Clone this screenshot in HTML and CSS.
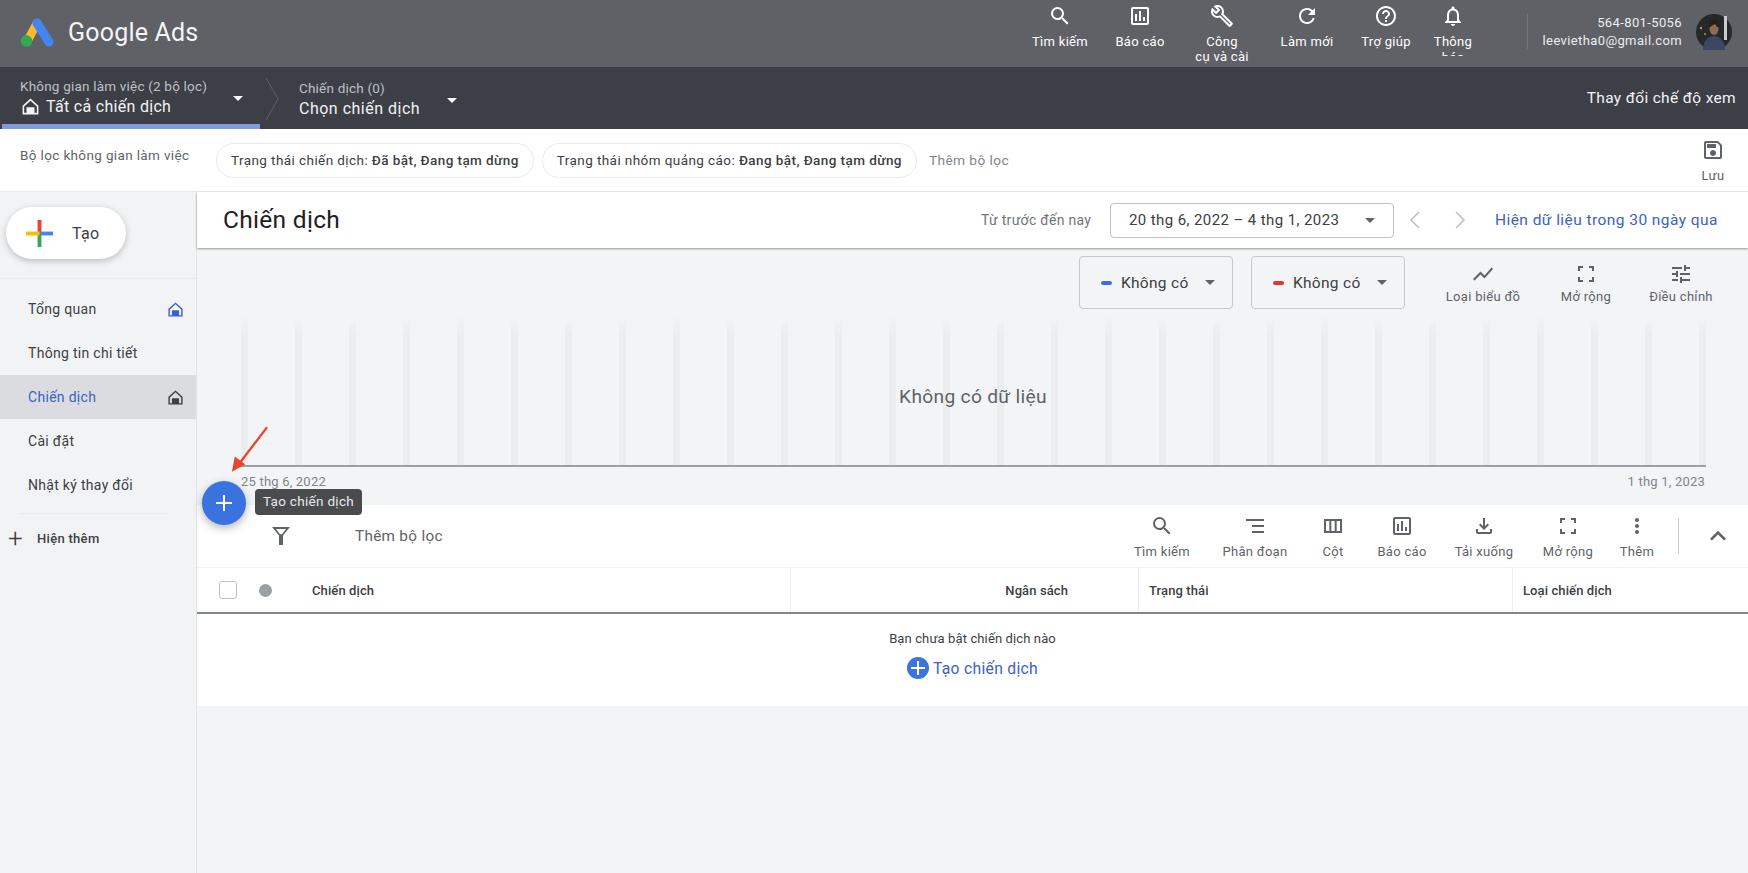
FILE: index.html
```html
<!DOCTYPE html>
<html lang="vi">
<head>
    <meta charset="UTF-8">
    <title>Chiến dịch - Google Ads</title>
    <link rel="stylesheet" href="styles.css">
</head>
<body>
    <svg class="defs" width="0" height="0">
        <symbol id="i-search" viewBox="0 0 24 24"><path d="M15.5 14h-.79l-.28-.27A6.471 6.471 0 0 0 16 9.5 6.5 6.5 0 1 0 9.5 16c1.61 0 3.09-.59 4.23-1.57l.27.28v.79l5 4.99L20.49 19l-4.99-5zm-6 0C7.01 14 5 11.99 5 9.5S7.01 5 9.5 5 14 7.01 14 9.5 11.99 14 9.5 14z"/></symbol>
        <symbol id="i-report" viewBox="0 0 24 24"><path d="M19 3H5c-1.1 0-2 .9-2 2v14c0 1.1.9 2 2 2h14c1.1 0 2-.9 2-2V5c0-1.1-.9-2-2-2zm0 16H5V5h14v14zM7 10h2v7H7zm4-3h2v10h-2zm4 6h2v4h-2z"/></symbol>
        <symbol id="i-wrench" viewBox="0 0 24 24"><path d="M22.61 18.99l-9.08-9.08c.93-2.34.45-5.1-1.44-7C9.79.61 6.21.4 3.66 2.26L7.5 6.11 6.08 7.52 2.25 3.69C.39 6.23.6 9.82 2.9 12.11c1.86 1.86 4.57 2.35 6.89 1.48l9.11 9.11c.39.39 1.02.39 1.41 0l2.3-2.3c.4-.38.4-1.01 0-1.41zm-3 1.6l-9.46-9.46c-.61.45-1.29.72-2 .82-1.36.2-2.79-.21-3.83-1.25C3.37 9.76 2.93 8.5 3 7.26l3.09 3.09 4.24-4.24-3.09-3.09c1.24-.07 2.49.37 3.44 1.31 1.08 1.08 1.49 2.57 1.24 3.96-.12.71-.42 1.37-.88 1.96l9.45 9.45-.88.88z"/></symbol>
        <symbol id="i-refresh" viewBox="0 0 24 24"><path d="M17.65 6.35A7.958 7.958 0 0 0 12 4c-4.42 0-7.99 3.58-7.99 8s3.57 8 7.99 8c3.73 0 6.84-2.55 7.73-6h-2.08A5.99 5.99 0 0 1 12 18c-3.31 0-6-2.69-6-6s2.69-6 6-6c1.66 0 3.14.69 4.22 1.78L13 11h7V4l-2.35 2.35z"/></symbol>
        <symbol id="i-help" viewBox="0 0 24 24"><path d="M11 18h2v-2h-2v2zm1-16C6.48 2 2 6.48 2 12s4.48 10 10 10 10-4.48 10-10S17.52 2 12 2zm0 18c-4.41 0-8-3.59-8-8s3.59-8 8-8 8 3.59 8 8-3.59 8-8 8zm0-14c-2.21 0-4 1.79-4 4h2c0-1.1.9-2 2-2s2 .9 2 2c0 2-3 1.75-3 5h2c0-2.25 3-2.5 3-5 0-2.21-1.79-4-4-4z"/></symbol>
        <symbol id="i-bell" viewBox="0 0 24 24"><path d="M12 22c1.1 0 2-.9 2-2h-4c0 1.1.9 2 2 2zm6-6v-5c0-3.07-1.63-5.64-4.5-6.32V4c0-.83-.67-1.5-1.5-1.5s-1.5.67-1.5 1.5v.68C7.64 5.36 6 7.92 6 11v5l-2 2v1h16v-1l-2-2zm-2 1H8v-6c0-2.48 1.51-4.5 4-4.5s4 2.02 4 4.5v6z"/></symbol>
        <symbol id="i-save" viewBox="0 0 24 24"><path d="M17 3H5a2 2 0 0 0-2 2v14a2 2 0 0 0 2 2h14c1.1 0 2-.9 2-2V7l-4-4zm2 16H5V5h11.17L19 7.83V19zm-7-7c-1.66 0-3 1.34-3 3s1.34 3 3 3 3-1.34 3-3-1.34-3-3-3zM6 6h9v4H6z"/></symbol>
        <symbol id="i-home" viewBox="0 0 24 24"><path d="M12 2L2 11v11h20V11L12 2zm8 18h-3v-7H7v7H4v-8.1l8-7.2 8 7.2V20z"/></symbol>
        <symbol id="i-chart" viewBox="0 0 24 24"><path d="M3.5 18.49l6-6.01 4 4L22 6.92l-1.41-1.41-7.09 7.97-4-4L2 16.99z"/></symbol>
        <symbol id="i-expand" viewBox="0 0 24 24"><path d="M6 15H4v5h5v-2H6v-3zM4 9h2V6h3V4H4v5zm14 9h-3v2h5v-5h-2v3zM15 4v2h3v3h2V4h-5z"/></symbol>
        <symbol id="i-tune" viewBox="0 0 24 24"><path d="M3 17v2h6v-2H3zM3 5v2h10V5H3zm10 16v-2h8v-2h-8v-2h-2v6h2zM7 9v2H3v2h4v2h2V9H7zm14 4v-2H11v2h10zm-6-4h2V7h4V5h-4V3h-2v6z"/></symbol>
        <symbol id="i-segment" viewBox="0 0 24 24"><path d="M9 19h12v-2H9v2zM3 5v2h18V5H3zm6 8h12v-2H9v2z"/></symbol>
        <symbol id="i-columns" viewBox="0 0 24 24"><path d="M3 5v14h18V5H3zm5.33 12H5V7h3.33v10zm5.34 0h-3.33V7h3.33v10zM19 17h-3.33V7H19v10z"/></symbol>
        <symbol id="i-download" viewBox="0 0 24 24"><path d="M12 16l-5-5 1.41-1.41L11 12.17V4h2v8.17l2.59-2.58L17 11l-5 5zM6 20c-1.1 0-2-.9-2-2v-3h2v3h12v-3h2v3c0 1.1-.9 2-2 2H6z"/></symbol>
        <symbol id="i-more" viewBox="0 0 24 24"><path d="M12 8c1.1 0 2-.9 2-2s-.9-2-2-2-2 .9-2 2 .9 2 2 2zm0 2c-1.1 0-2 .9-2 2s.9 2 2 2 2-.9 2-2-.9-2-2-2zm0 6c-1.1 0-2 .9-2 2s.9 2 2 2 2-.9 2-2-.9-2-2-2z"/></symbol>
    </svg>

    <header class="topbar">
        <div class="brand">
            <svg class="brand-logo" viewBox="0 0 34 30">
                <path d="M8 23L17 6" stroke="#f9bb2d" stroke-width="8.5" stroke-linecap="round"/>
                <path d="M17 6l12 19" stroke="#4285f4" stroke-width="9" stroke-linecap="round"/>
                <circle cx="6.5" cy="24" r="5.8" fill="#34a853"/>
            </svg>
            <span class="brand-name">Google Ads</span>
        </div>
        <nav class="topnav">
            <a class="topnav-item"><svg class="icon"><use href="#i-search"/></svg><span class="topnav-label">Tìm kiếm</span></a>
            <a class="topnav-item"><svg class="icon"><use href="#i-report"/></svg><span class="topnav-label">Báo cáo</span></a>
            <a class="topnav-item"><svg class="icon"><use href="#i-wrench"/></svg><span class="topnav-label label-wrap">Công<br>cụ và cài</span></a>
            <a class="topnav-item"><svg class="icon"><use href="#i-refresh"/></svg><span class="topnav-label">Làm mới</span></a>
            <a class="topnav-item"><svg class="icon"><use href="#i-help"/></svg><span class="topnav-label">Trợ giúp</span></a>
            <a class="topnav-item"><svg class="icon"><use href="#i-bell"/></svg><span class="topnav-label label-cut">Thông báo</span></a>
        </nav>
        <div class="account">
            <div>564-801-5056</div>
            <div>leevietha0@gmail.com</div>
        </div>
        <svg class="avatar" viewBox="0 0 36 36">
            <circle cx="18" cy="18" r="18" fill="#26282a"/>
            <rect x="28" y="2" width="3" height="24" fill="#c9ccd0"/>
            <circle cx="5" cy="14" r="1.2" fill="#a89a6a"/>
            <circle cx="9" cy="20" r="1" fill="#a89a6a"/>
            <ellipse cx="18" cy="15" rx="4.5" ry="6" fill="#8d6b54"/>
            <path d="M14 6h8l2 7h-3l-2-3-5 3h-2z" fill="#2d1f18"/>
            <path d="M7 36c0-9 5-14 11-14s11 5 11 14z" fill="#3d4763"/>
        </svg>
    </header>

    <div class="crumbbar">
        <div class="crumb crumb-active">
            <div>
                <div class="crumb-small">Không gian làm việc (2 bộ lọc)</div>
                <div class="crumb-main"><svg class="icon crumb-home"><use href="#i-home"/></svg>Tất cả chiến dịch</div>
            </div>
            <span class="caret caret-white"></span>
        </div>
        <svg class="crumb-sep" viewBox="0 0 14 44"><path d="M1 1l12 21L1 43" fill="none" stroke="#5f6368"/></svg>
        <div class="crumb">
            <div>
                <div class="crumb-small">Chiến dịch (0)</div>
                <div class="crumb-main crumb-wide">Chọn chiến dịch</div>
            </div>
            <span class="caret caret-white"></span>
        </div>
        <div class="crumb-right">Thay đổi chế độ xem</div>
    </div>

    <div class="filterbar">
        <span class="filter-title">Bộ lọc không gian làm việc</span>
        <span class="chip">Trạng thái chiến dịch: <b>Đã bật, Đang tạm dừng</b></span>
        <span class="chip">Trạng thái nhóm quảng cáo: <b>Đang bật, Đang tạm dừng</b></span>
        <span class="filter-add">Thêm bộ lọc</span>
        <div class="tool save-tool"><svg class="icon"><use href="#i-save"/></svg><span>Lưu</span></div>
    </div>

    <div class="layout">
        <aside class="sidebar">
            <button class="create-btn">
                <svg class="create-plus" viewBox="0 0 28 28">
                    <rect x="12" y="0" width="4" height="14" fill="#ea4335"/>
                    <rect x="14" y="12" width="14" height="4" fill="#4285f4"/>
                    <rect x="12" y="14" width="4" height="14" fill="#34a853"/>
                    <rect x="0" y="12" width="14" height="4" fill="#fbbc04"/>
                </svg>
                Tạo
            </button>
            <div class="side-divider"></div>
            <ul class="side-menu">
                <li class="side-item">Tổng quan <svg class="icon side-home blue"><use href="#i-home"/></svg></li>
                <li class="side-item">Thông tin chi tiết</li>
                <li class="side-item selected"><span>Chiến dịch</span> <svg class="icon side-home"><use href="#i-home"/></svg></li>
                <li class="side-item">Cài đặt</li>
                <li class="side-item">Nhật ký thay đổi</li>
            </ul>
            <div class="side-divider short"></div>
            <div class="show-more"><span class="show-more-plus">+</span>Hiện thêm</div>
        </aside>

        <main class="content">
            <div class="title-bar">
                <h1>Chiến dịch</h1>
                <span class="range-label">Từ trước đến nay</span>
                <div class="date-box"><span>20 thg 6, 2022 – 4 thg 1, 2023</span><span class="caret"></span></div>
                <svg class="pager" viewBox="0 0 12 20"><path d="M10 2L2 10l8 8" fill="none" stroke="#bdc1c6" stroke-width="1.6"/></svg>
                <svg class="pager next" viewBox="0 0 12 20"><path d="M2 2l8 8-8 8" fill="none" stroke="#bdc1c6" stroke-width="1.6"/></svg>
                <a class="range-link">Hiện dữ liệu trong 30 ngày qua</a>
            </div>

            <section class="chart">
                <div class="chart-controls">
                    <div class="metric"><i class="metric-dash dash-blue"></i>Không có<span class="caret"></span></div>
                    <div class="metric"><i class="metric-dash dash-red"></i>Không có<span class="caret"></span></div>
                    <div class="chart-tools">
                        <div class="tool"><svg class="icon"><use href="#i-chart"/></svg><span>Loại biểu đồ</span></div>
                        <div class="tool"><svg class="icon"><use href="#i-expand"/></svg><span>Mở rộng</span></div>
                        <div class="tool"><svg class="icon"><use href="#i-tune"/></svg><span>Điều chỉnh</span></div>
                    </div>
                </div>
                <div class="plot">
                    <i></i><i></i><i></i><i></i><i></i><i></i><i></i>
                    <i></i><i></i><i></i><i></i><i></i><i></i><i></i>
                    <i></i><i></i><i></i><i></i><i></i><i></i><i></i>
                    <i></i><i></i><i></i><i></i><i></i><i></i><i></i>
                    <span class="plot-empty">Không có dữ liệu</span>
                </div>
                <div class="plot-dates"><span>25 thg 6, 2022</span><span>1 thg 1, 2023</span></div>
            </section>

            <section class="table-card">
                <div class="table-toolbar">
                    <svg class="filter-icon" viewBox="0 0 18 18"><path fill-rule="evenodd" d="M0 0h18l-7 8.5V18H7V8.5L0 0zm4 2l4 5.2h2L14 2H4z"/></svg>
                    <span class="toolbar-add">Thêm bộ lọc</span>
                    <div class="table-tools">
                        <div class="tool"><svg class="icon"><use href="#i-search"/></svg><span>Tìm kiếm</span></div>
                        <div class="tool"><svg class="icon"><use href="#i-segment"/></svg><span>Phân đoạn</span></div>
                        <div class="tool"><svg class="icon"><use href="#i-columns"/></svg><span>Cột</span></div>
                        <div class="tool"><svg class="icon"><use href="#i-report"/></svg><span>Báo cáo</span></div>
                        <div class="tool"><svg class="icon"><use href="#i-download"/></svg><span>Tải xuống</span></div>
                        <div class="tool"><svg class="icon"><use href="#i-expand"/></svg><span>Mở rộng</span></div>
                        <div class="tool"><svg class="icon"><use href="#i-more"/></svg><span>Thêm</span></div>
                    </div>
                    <div class="toolbar-divider"></div>
                    <svg class="collapse" viewBox="0 0 24 24"><path d="M7.41 15.41L12 10.83l4.59 4.58L18 14l-6-6-6 6z"/></svg>
                </div>
                <div class="table-head">
                    <div class="col col-name"><span class="checkbox"></span><span class="status-dot"></span>Chiến dịch</div>
                    <div class="col col-budget">Ngân sách</div>
                    <div class="col">Trạng thái</div>
                    <div class="col">Loại chiến dịch</div>
                </div>
                <div class="table-empty">
                    <p>Bạn chưa bật chiến dịch nào</p>
                    <a class="empty-link">
                        <svg class="empty-plus" viewBox="0 0 22 22"><circle cx="11" cy="11" r="11" fill="#3b74e0"/><path d="M11 4v14M4 11h14" stroke="#fff" stroke-width="2"/></svg>
                        Tạo chiến dịch
                    </a>
                </div>
            </section>
        </main>

        <button class="fab"><svg viewBox="0 0 20 20"><path d="M10 2v16M2 10h16" stroke="#fff" stroke-width="2"/></svg></button>
        <div class="tooltip">Tạo chiến dịch</div>
        <svg class="red-arrow" viewBox="0 0 40 50"><path d="M38 2L9 40" stroke="#e8432e" stroke-width="2.4"/><path d="M1 49l3-16 11 8z" fill="#e8432e"/></svg>
    </div>
</body>
</html>
```

FILE: styles.css
```css
* {
    box-sizing: border-box;
}
body {
    margin: 0;
    width: 1748px;
    height: 873px;
    overflow: hidden;
    background: #f3f4f6;
    color: #3c4043;
    font-family: Roboto, "Noto Sans", sans-serif;
    font-size: 13px;
    letter-spacing: 0.3px;
}
.defs {
    position: absolute;
}
.icon {
    width: 24px;
    height: 24px;
    fill: currentColor;
    flex: none;
}
.caret {
    width: 0;
    height: 0;
    border-left: 5.5px solid transparent;
    border-right: 5.5px solid transparent;
    border-top: 5.5px solid #5f6368;
    flex: none;
}
.caret-white {
    border-top-color: #fff;
}

/* top bar */
.topbar {
    display: flex;
    height: 67px;
    background: #5f6167;
    color: #fff;
    overflow: hidden;
}
.brand {
    display: flex;
    align-items: center;
    width: 1020px;
    padding: 0 0 3px 20px;
}
.brand-logo {
    width: 34px;
    height: 30px;
}
.brand-name {
    margin-left: 14px;
    font-size: 25px;
    letter-spacing: 0.2px;
    color: #f4f5f6;
}
.topnav {
    display: grid;
    grid-template-columns: 80px 80px 84px 86px 72px 62px;
    width: 507px;
}
.topnav-item {
    display: flex;
    flex-direction: column;
    align-items: center;
    padding-top: 4px;
    text-align: center;
    color: #fff;
}
.topnav-label {
    margin-top: 6px;
    line-height: 16px;
    overflow: hidden;
}
.label-wrap {
    line-height: 15px;
}
.label-cut {
    width: 44px;
    max-height: 22px;
}
.account {
    width: 155px;
    margin: 14px 0 18px;
    border-left: 1px solid #74767b;
    text-align: right;
    line-height: 18px;
    letter-spacing: 0.38px;
    color: #eceded;
}
.avatar {
    width: 36px;
    height: 36px;
    margin: 14px 0 0 14px;
}

/* workspace bar */
.crumbbar {
    display: flex;
    align-items: stretch;
    height: 62px;
    background: #3c3f46;
    color: #fff;
}
.crumb {
    display: flex;
    align-items: center;
    padding-top: 3px;
}
.crumb-active {
    justify-content: space-between;
    width: 258px;
    margin-left: 2px;
    padding: 3px 17px 0 18px;
    border-bottom: 5px solid #7f9be0;
}
.crumb .caret {
    margin-top: 2px;
}
.crumb:not(.crumb-active) .caret {
    margin-left: 27px;
}
.crumb-small {
    font-size: 13.5px;
    letter-spacing: 0.2px;
    color: #bdc1c6;
    line-height: 18px;
}
.crumb-main {
    display: flex;
    align-items: center;
    margin-top: 1px;
    font-size: 16px;
    line-height: 22px;
    color: #f1f3f4;
}
.crumb-wide {
    letter-spacing: 0.5px;
}
.crumb-home {
    width: 19px;
    height: 19px;
    margin: 0 6px 0 1px;
}
.crumb-sep {
    width: 14px;
    height: 44px;
    margin: 10px 20px 0 5px;
}
.crumb-right {
    margin-left: auto;
    padding-right: 12px;
    align-self: center;
    font-size: 15.5px;
    letter-spacing: 0.33px;
    color: #f1f3f4;
}

/* filter bar */
.filterbar {
    display: flex;
    align-items: center;
    height: 63px;
    padding: 0 0 0 20px;
    background: #fff;
    border-bottom: 1px solid #e8eaed;
    letter-spacing: 0.42px;
}
.filter-title {
    width: 196px;
    margin-top: -10px;
    font-size: 13.5px;
    letter-spacing: 0.36px;
    color: #5f6368;
}
.chip {
    height: 35px;
    line-height: 33px;
    padding: 0 14px;
    margin-right: 8px;
    border: 1px solid #e8eaed;
    border-radius: 18px;
    color: #3c4043;
    font-size: 13.5px;
    white-space: nowrap;
}
.chip b {
    font-weight: 500;
}
.filter-add {
    margin-left: 4px;
    color: #80868b;
    font-size: 13.7px;
}
.save-tool {
    margin-left: auto;
    width: 70px;
    letter-spacing: 0.3px;
}
.tool {
    display: flex;
    flex-direction: column;
    align-items: center;
    gap: 6px;
    color: #5f6368;
    white-space: nowrap;
}

/* page layout */
.layout {
    position: relative;
    display: flex;
    height: 681px;
}
.sidebar {
    width: 197px;
    flex: none;
    padding-top: 15px;
    background: #f2f3f5;
    border-right: 1px solid #e3e4e6;
}
.create-btn {
    display: flex;
    align-items: center;
    gap: 19px;
    width: 120px;
    height: 52px;
    margin-left: 6px;
    padding: 0 0 0 20px;
    border: 0;
    border-radius: 26px;
    background: #fff;
    box-shadow: 0 2px 6px rgba(60, 64, 67, 0.3);
    color: #3c4043;
    font: inherit;
    font-size: 16px;
    letter-spacing: 0.3px;
}
.create-plus {
    width: 27px;
    height: 27px;
}
.side-divider {
    height: 1px;
    margin-top: 19px;
    background: #e8eaed;
}
.side-divider.short {
    width: 148px;
    margin: 6px 0 0 20px;
}
.side-menu {
    list-style: none;
    margin: 8px 0 0;
    padding: 0;
}
.side-item {
    display: flex;
    align-items: center;
    justify-content: space-between;
    height: 44px;
    padding: 0 12px 0 28px;
    font-size: 14px;
    color: #3c4043;
}
.side-item.selected {
    background: #dadce0;
}
.side-item.selected span {
    color: #3b62c4;
}
.side-home {
    width: 17px;
    height: 17px;
}
.side-home.blue {
    color: #3b62c4;
}
.show-more {
    display: flex;
    align-items: center;
    height: 30px;
    margin-top: 9px;
    font-weight: 500;
    font-size: 13px;
}
.show-more-plus {
    width: 37px;
    padding-left: 8px;
    font-size: 26px;
    font-weight: 300;
    line-height: 26px;
}

/* main column */
.content {
    flex: 1;
    min-width: 0;
    height: 100%;
}
.title-bar {
    display: flex;
    align-items: center;
    height: 56px;
    padding-left: 26px;
    background: #fff;
    box-shadow: 0 1px 2px rgba(0, 0, 0, 0.4);
}
.title-bar h1 {
    width: 758px;
    margin: -2px 0 0;
    font-size: 24.5px;
    font-weight: 400;
    color: #202124;
}
.range-label {
    width: 129px;
    font-size: 14px;
    color: #70757a;
}
.date-box {
    display: flex;
    align-items: center;
    justify-content: space-between;
    width: 284px;
    height: 35px;
    padding: 0 18px 0 18px;
    border: 1px solid #bdc1c6;
    border-radius: 4px;
    font-size: 15px;
    letter-spacing: 0.4px;
}
.pager {
    width: 12px;
    height: 20px;
    margin-left: 15px;
}
.pager.next {
    margin-left: 33px;
}
.range-link {
    margin-left: 29px;
    font-size: 15.5px;
    letter-spacing: 0.44px;
    color: #3b62c4;
}

/* chart */
.chart {
    height: 257px;
}
.chart-controls {
    display: flex;
    height: 61px;
    padding: 8px 0 0 882px;
}
.metric {
    display: flex;
    align-items: center;
    width: 154px;
    height: 53px;
    margin-right: 18px;
    padding: 0 17px 0 21px;
    border: 1px solid #c6c8cc;
    border-radius: 4px;
    font-size: 15.5px;
}
.metric .caret {
    margin-left: auto;
}
.metric-dash {
    width: 11px;
    height: 4px;
    margin-right: 9px;
    border-radius: 2px;
}
.dash-blue {
    background: #3b6fd8;
}
.dash-red {
    background: #d93a2b;
}
.chart-tools {
    display: grid;
    grid-template-columns: 110px 96px 94px;
    margin-left: 5px;
    padding-top: 6px;
}
.chart-tools .tool {
    gap: 3px;
}
.plot {
    position: relative;
    display: flex;
    justify-content: space-between;
    height: 151px;
    margin: 7px 42px 0 43px;
    padding: 0 0 0 1px;
    border-bottom: 2px solid #9aa0a6;
}
.plot i {
    width: 7px;
    background: linear-gradient(rgba(236, 237, 239, 0), #ecedef 12%);
}
.plot-empty {
    position: absolute;
    left: 0;
    right: 0;
    top: 69px;
    text-align: center;
    font-size: 19.2px;
    color: #5f6368;
}
.plot-dates {
    display: flex;
    justify-content: space-between;
    margin: 7px 43px 0 44px;
    color: #80868b;
    font-size: 13px;
    letter-spacing: 0.2px;
}

/* table */
.table-card {
    background: #fff;
}
.table-toolbar {
    display: flex;
    align-items: center;
    height: 62px;
    padding-left: 75px;
}
.filter-icon {
    width: 18px;
    height: 18px;
    fill: #5f6368;
}
.toolbar-add {
    margin-left: 65px;
    font-size: 15.3px;
    color: #5f6368;
}
.table-tools {
    display: grid;
    grid-template-columns: 100px 86px 70px 68px 96px 72px 66px;
    margin-left: auto;
}
.toolbar-divider {
    width: 1px;
    height: 36px;
    margin: 0 0 0 8px;
    background: #c9cbcf;
}
.collapse {
    width: 32px;
    height: 32px;
    margin: 0 14px 0 23px;
    fill: #5f6368;
}
.table-head {
    display: grid;
    grid-template-columns: 593px 348px 374px 236px;
    height: 47px;
    border-top: 1px solid #f1f3f4;
    border-bottom: 2px solid #80868b;
    font-weight: 500;
    letter-spacing: 0.1px;
    color: #3c4043;
}
.col {
    display: flex;
    align-items: center;
    padding-left: 10px;
    border-left: 1px solid #eceef0;
}
.col-name {
    padding-left: 22px;
    border-left: 0;
}
.col-budget {
    justify-content: flex-end;
    padding-right: 70px;
}
.checkbox {
    width: 18px;
    height: 18px;
    border: 1.5px solid #bdc1c6;
    border-radius: 3px;
}
.status-dot {
    width: 13px;
    height: 13px;
    margin: 0 40px 0 22px;
    border-radius: 50%;
    background: #9aa0a6;
}
.table-empty {
    display: flex;
    flex-direction: column;
    align-items: center;
    height: 92px;
    padding-top: 17px;
}
.table-empty p {
    margin: 0;
    line-height: 16px;
    letter-spacing: 0.12px;
}
.empty-link {
    display: flex;
    align-items: center;
    gap: 4px;
    margin-top: 10px;
    font-size: 15.7px;
    color: #3b62c4;
}
.empty-plus {
    width: 22px;
    height: 22px;
}

/* overlays on the campaign page */
.fab {
    position: absolute;
    left: 202px;
    top: 289px;
    display: flex;
    align-items: center;
    justify-content: center;
    width: 44px;
    height: 44px;
    padding: 0;
    border: 0;
    border-radius: 50%;
    background: #3a73e0;
    box-shadow: 0 3px 8px rgba(60, 64, 67, 0.4);
}
.fab svg {
    width: 20px;
    height: 20px;
}
.tooltip {
    position: absolute;
    left: 255px;
    top: 297px;
    width: 107px;
    height: 26px;
    border-radius: 4px;
    background: #4a4b4d;
    color: #e8eaed;
    text-align: center;
    line-height: 25px;
    font-size: 13.5px;
}
.red-arrow {
    position: absolute;
    left: 231px;
    top: 233px;
    width: 38px;
    height: 48px;
}
```
